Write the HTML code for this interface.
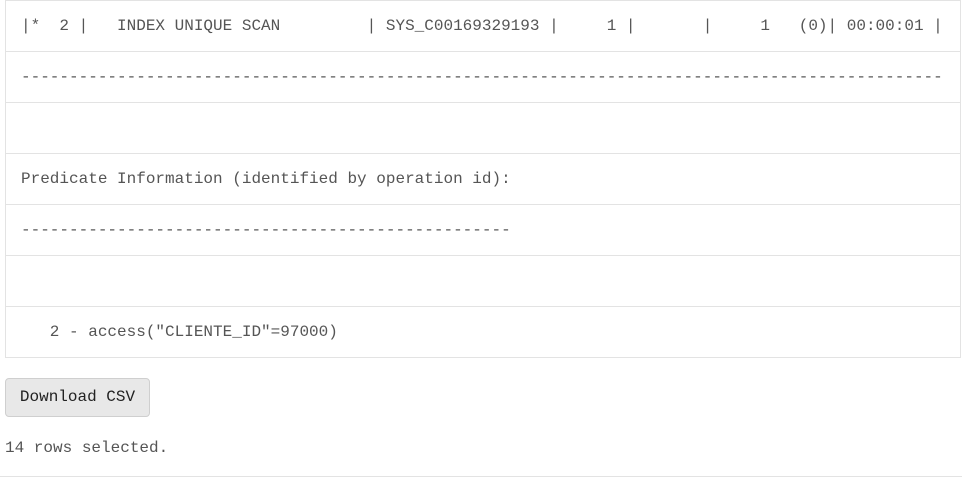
<!DOCTYPE html>
<html><head><meta charset="utf-8"><style>
html,body{margin:0;padding:0;background:#fff;width:962px;height:478px;overflow:hidden}
body{font-family:"Liberation Mono",monospace;font-size:16px;color:#555}
table{position:absolute;left:5px;top:0;width:956px;border-collapse:collapse}
td{border:1px solid #e3e3e3;height:50px;padding:0 0 0 15px;white-space:pre;vertical-align:middle;line-height:20px}
.btn{position:absolute;left:5px;top:378px;width:143px;height:37px;background:#e8e8e8;border:1px solid #cfcfcf;border-radius:4px;color:#222;line-height:37px;text-align:center;font-size:16px}
.rows{position:absolute;left:5px;top:438px;line-height:20px}
.bot{position:absolute;left:0;top:476px;width:962px;border-top:1px solid #e3e3e3}
</style></head><body>
<table>
<tr><td>|*  2 |   INDEX UNIQUE SCAN         | SYS_C00169329193 |     1 |       |     1   (0)| 00:00:01 |</td></tr>
<tr><td>------------------------------------------------------------------------------------------------</td></tr>
<tr><td></td></tr>
<tr><td>Predicate Information (identified by operation id):</td></tr>
<tr><td>---------------------------------------------------</td></tr>
<tr><td></td></tr>
<tr><td>   2 - access("CLIENTE_ID"=97000)</td></tr>
</table>
<div class="btn">Download CSV</div>
<div class="rows">14 rows selected.</div>
<div class="bot"></div>
</body></html>
